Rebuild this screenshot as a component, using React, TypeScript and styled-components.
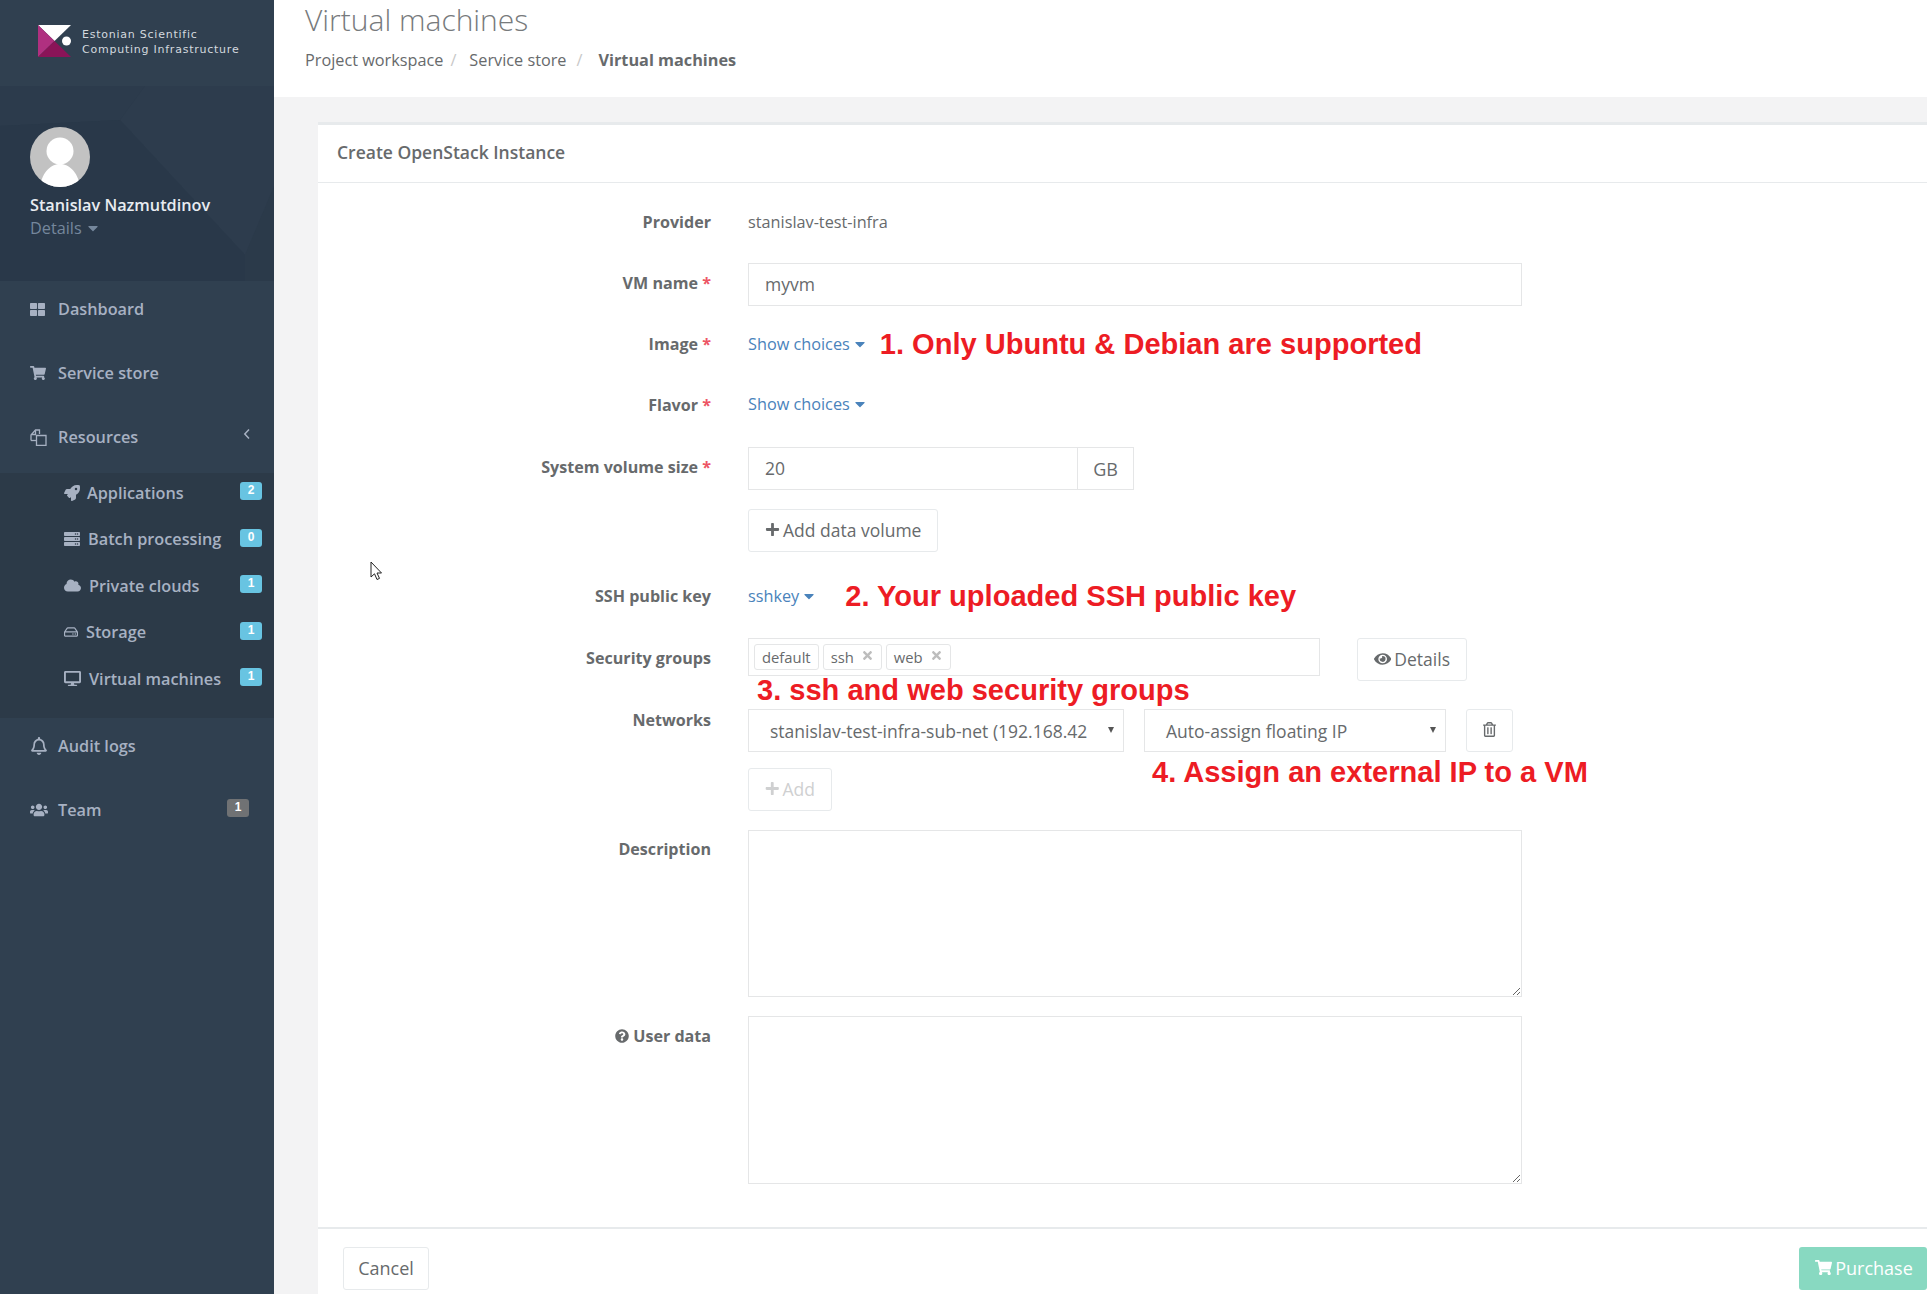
import * as React from "react";
import styled, { createGlobalStyle } from "styled-components";
import {
  FaCaretDown,
  FaCloud,
  FaDesktop,
  FaEye,
  FaPlus,
  FaQuestionCircle,
  FaRegBell,
  FaRegHdd,
  FaRegTrashAlt,
  FaRocket,
  FaServer,
  FaShoppingCart,
  FaThLarge,
  FaTimes,
  FaUsers,
} from "react-icons/fa";

const GlobalStyle = createGlobalStyle`
  html, body {
    margin: 0;
    padding: 0;
    height: 1294px;
    overflow: hidden;
    background: #f3f3f4;
  }
  * { box-sizing: border-box; }
`;

const Page = styled.div`
  display: flex;
  position: relative;
  width: 1927px;
  height: 1294px;
  overflow: hidden;
  font-family: "Open Sans", sans-serif;
  font-size: 16.25px;
  color: #676a6c;
`;

const Sidebar = styled.aside`
  flex: 0 0 274px;
  background: #304050;
  color: #a7b1c2;
  font-weight: 600;
`;

const LogoBar = styled.div`
  height: 86px;
  display: flex;
  align-items: center;
  padding: 0 0 4px 38px;
  gap: 11px;
`;

const LogoText = styled.div`
  margin-top: 2px;
  font-family: "DejaVu Sans", sans-serif;
  font-size: 11px;
  font-weight: 400;
  line-height: 15px;
  letter-spacing: 0.76px;
  color: #d3d9df;
  white-space: nowrap;
`;

const Profile = styled.div`
  position: relative;
  height: 195px;
  padding: 41px 0 0 30px;
  background: #2b3a4a;
  overflow: hidden;
`;

const ProfileShapes = styled.svg`
  position: absolute;
  inset: 0;
`;

const Avatar = styled.svg`
  position: relative;
  display: block;
  width: 60px;
  height: 60px;
  border-radius: 50%;
`;

const ProfileName = styled.div`
  position: relative;
  margin-top: 7px;
  color: #e8ecf1;
  line-height: 22px;
  white-space: nowrap;
`;

const ProfileDetails = styled.div`
  position: relative;
  display: flex;
  align-items: center;
  gap: 3px;
  margin-top: 1px;
  font-weight: 400;
  line-height: 22px;
  color: #75879c;
`;

const NavList = styled.nav`
  display: block;
`;

const NavItem = styled.div`
  position: relative;
  display: flex;
  align-items: center;
  height: 64px;
  padding: 0 0 8px 30px;
`;

const NavIcon = styled.span<{ $size?: number }>`
  flex: 0 0 28px;
  display: flex;
  align-items: center;
  font-size: ${(p) => p.$size ?? 15}px;
`;

const SubMenu = styled.div`
  background: #2c3a48;
  padding-bottom: 12.5px;
`;

const SubItem = styled.div`
  position: relative;
  display: flex;
  align-items: center;
  height: 46.5px;
  padding: 0 0 7.5px 64px;
`;

const SubIcon = styled.span<{ $width: number; $size?: number }>`
  flex: 0 0 ${(p) => p.$width}px;
  display: flex;
  align-items: center;
  font-size: ${(p) => p.$size ?? 16}px;
`;

const Badge = styled.span<{ $gray?: boolean }>`
  position: absolute;
  right: ${(p) => (p.$gray ? 25 : 12)}px;
  top: ${(p) => (p.$gray ? 17 : 9)}px;
  width: 22px;
  height: 18px;
  border-radius: 3px;
  background: ${(p) => (p.$gray ? "#707274" : "#68c4e2")};
  color: #fff;
  font-family: "Liberation Sans", sans-serif;
  font-size: 12px;
  font-weight: 700;
  line-height: 16px;
  text-align: center;
`;

const Collapse = styled.svg`
  position: absolute;
  right: 23px;
  top: 19px;
`;

const Main = styled.main`
  flex: 1;
  min-width: 0;
`;

const Header = styled.header`
  height: 97px;
  padding: 0 0 0 31px;
  background: #fff;
`;

const PageTitle = styled.h1`
  margin: 0;
  height: 42px;
  font-size: 30px;
  font-weight: 300;
  line-height: 40px;
  color: #777a7c;
`;

const Breadcrumbs = styled.div`
  display: flex;
  align-items: center;
  height: 36px;
  white-space: nowrap;
`;

const Crumb = styled.span<{ $strong?: boolean }>`
  font-weight: ${(p) => (p.$strong ? 700 : 400)};
`;

const CrumbSep = styled.span<{ $before: number; $after: number }>`
  margin: 0 ${(p) => p.$after}px 0 ${(p) => p.$before}px;
  color: #c8c8c8;
`;

const Content = styled.div`
  padding: 25px 0 0 44px;
`;

const Card = styled.section`
  background: #fff;
  border-top: 3px solid #e7eaec;
  height: 1172px;
`;

const CardTitle = styled.div`
  height: 58px;
  padding: 0 0 4px 19px;
  display: flex;
  align-items: center;
  font-size: 17.5px;
  font-weight: 600;
  border-bottom: 1px solid #e7eaec;
`;

const FormBody = styled.div`
  height: 1046px;
  padding-top: 18px;
  border-bottom: 2px solid #e7eaec;
`;

const Row = styled.div<{ $gap?: number }>`
  display: grid;
  grid-template-columns: 393px 774px;
  column-gap: 37px;
  margin-bottom: ${(p) => p.$gap ?? 19}px;
  min-height: 43px;
`;

const Label = styled.label<{ $top?: number }>`
  padding-top: ${(p) => p.$top ?? 9}px;
  line-height: 22px;
  font-weight: 700;
  font-size: 16.1px;
  text-align: right;
  white-space: nowrap;
`;

const Required = styled.span`
  color: #ed5565;
`;

const HelpIcon = styled(FaQuestionCircle)`
  font-size: 14px;
  margin-right: 4px;
  vertical-align: -1px;
`;

const Control = styled.div`
  position: relative;
  display: flex;
  align-items: center;
  min-height: 43px;
  white-space: nowrap;
`;

const StaticValue = styled.span`
  margin-top: -1px;
`;

const ChoiceLink = styled.a`
  display: inline-flex;
  align-items: center;
  margin-top: -1px;
  color: #4a83bb;
  & > svg {
    margin-left: 2px;
  }
`;

const Annotation = styled.span<{ $gap?: number }>`
  margin-left: ${(p) => p.$gap ?? 0}px;
  font-family: "Liberation Sans", sans-serif;
  font-size: 29.05px;
  font-weight: 700;
  color: #ed1c24;
  white-space: nowrap;
`;

const FloatingAnnotation = styled(Annotation)<{ $x: number; $y: number }>`
  position: absolute;
  left: ${(p) => p.$x}px;
  top: ${(p) => p.$y}px;
  margin: 0;
  line-height: 34px;
`;

const TextInput = styled.input<{ $width?: number }>`
  width: ${(p) => (p.$width ? `${p.$width}px` : "100%")};
  height: 43px;
  padding: 0 16px 2px;
  border: 1px solid #e5e6e7;
  font: 17.5px "Open Sans", sans-serif;
  color: #676a6c;
  outline: none;
`;

const Addon = styled.span`
  width: 56px;
  height: 43px;
  display: flex;
  align-items: center;
  justify-content: center;
  border: 1px solid #e5e6e7;
  border-left: none;
  font-size: 18px;
`;

const Button = styled.button<{ $muted?: boolean; $width?: number }>`
  display: inline-flex;
  align-items: center;
  justify-content: center;
  gap: 3px;
  width: ${(p) => (p.$width ? `${p.$width}px` : "auto")};
  height: 43px;
  padding: 0 16px 2px;
  background: #fff;
  border: 1px solid #e7eaec;
  border-radius: 3px;
  font: 17.5px "Open Sans", sans-serif;
  color: ${(p) => (p.$muted ? "#cfd0d1" : "#676a6c")};
`;

const TagBox = styled.div`
  display: flex;
  align-items: center;
  gap: 4px;
  width: 572px;
  height: 38px;
  margin-right: 37px;
  padding: 0 0 0 5px;
  border: 1px solid #e5e6e7;
  align-self: flex-start;
`;

const Tag = styled.span`
  display: inline-flex;
  align-items: center;
  gap: 7px;
  height: 26px;
  padding: 0 7px;
  border: 1px solid #e5e6e7;
  border-radius: 3px;
  font-size: 14.8px;
`;

const TagClose = styled(FaTimes)`
  font-size: 13px;
  color: #bdbdbd;
  margin-top: -4px;
`;

const Select = styled.div<{ $width: number }>`
  position: relative;
  flex: 0 0 ${(p) => p.$width}px;
  height: 43px;
  padding: 0 0 0 21px;
  margin-right: 20px;
  border: 1px solid #e5e6e7;
  font-size: 17.5px;
  line-height: 42px;
  overflow: hidden;
  &::after {
    content: "";
    position: absolute;
    right: 9px;
    top: 17px;
    border-style: solid;
    border-width: 6px 3.5px 0;
    border-color: #555 transparent transparent;
  }
`;

const TextArea = styled.textarea<{ $height: number }>`
  display: block;
  width: 100%;
  height: ${(p) => p.$height}px;
  border: 1px solid #e5e6e7;
  resize: vertical;
  outline: none;
`;

const Footer = styled.div`
  display: flex;
  justify-content: space-between;
  align-items: flex-start;
  padding: 18px 0 0 25px;
`;

const CancelButton = styled(Button)`
  width: 86px;
  font-size: 18px;
`;

const PurchaseButton = styled.button`
  display: inline-flex;
  align-items: center;
  justify-content: center;
  gap: 3px;
  width: 128px;
  height: 43px;
  padding: 0 0 2px 2px;
  border: none;
  border-radius: 3px;
  background: #88d9c1;
  color: #fff;
  font: 18px "Open Sans", sans-serif;
`;

const Pointer = styled.svg`
  position: absolute;
  left: 370px;
  top: 561px;
`;

const App = () => {
  return (
    <Page>
      <GlobalStyle />
      <Sidebar>
        <LogoBar>
          <svg width="33" height="32" viewBox="0 0 33 32">
            <polygon points="0,0 33,0 16.5,16" fill="#fff" />
            <polygon points="0,0 16.5,16 0,32" fill="#b03080" />
            <polygon points="0,32 16.5,16 33,32" fill="#8a1458" />
            <circle cx="28.5" cy="16" r="4.5" fill="#fff" />
          </svg>
          <LogoText>
            Estonian Scientific
            <br />
            Computing Infrastructure
          </LogoText>
        </LogoBar>
        <Profile>
          <ProfileShapes width="274" height="195" viewBox="0 0 274 195">
            <polygon points="120,34 145,0 274,0 274,100 245,169" fill="#2d3c4d" />
            <polygon points="0,0 145,0 120,34 0,40" fill="#2c3b4c" />
            <polygon points="0,40 120,34 245,169 245,195 0,195" fill="#293849" />
          </ProfileShapes>
          <Avatar viewBox="0 0 60 60">
            <rect width="60" height="60" fill="#c2c2c2" />
            <circle cx="30" cy="24" r="13.5" fill="#fff" />
            <path d="M10 60 C12 44 22 37 30 37 C38 37 48 44 50 60 Z" fill="#fff" />
          </Avatar>
          <ProfileName>Stanislav Nazmutdinov</ProfileName>
          <ProfileDetails>
            Details <FaCaretDown size={16} />
          </ProfileDetails>
        </Profile>
        <NavList>
          <NavItem>
            <NavIcon>
              <FaThLarge />
            </NavIcon>
            Dashboard
          </NavItem>
          <NavItem>
            <NavIcon $size={16}>
              <FaShoppingCart />
            </NavIcon>
            Service store
          </NavItem>
          <NavItem>
            <NavIcon>
              <svg width="17" height="17" viewBox="0 0 17 17" fill="none" stroke="currentColor" strokeWidth="1.3">
                <path d="M1 11.5 V6 L5.5 1 H9.5 V5" />
                <path d="M1 11.5 H6" />
                <path d="M6.5 6.5 H16 V16.3 H6.5 Z" />
                <path d="M5.5 1.5 V5.5 H1.5" />
              </svg>
            </NavIcon>
            Resources
            <Collapse width="8" height="12" viewBox="0 0 8 12" fill="none" stroke="currentColor" strokeWidth="1.5">
              <polyline points="6,1.5 1.8,6 6,10.5" />
            </Collapse>
          </NavItem>
          <SubMenu>
            <SubItem>
              <SubIcon $width={23}>
                <FaRocket />
              </SubIcon>
              Applications
              <Badge>2</Badge>
            </SubItem>
            <SubItem>
              <SubIcon $width={24}>
                <FaServer />
              </SubIcon>
              Batch processing
              <Badge>0</Badge>
            </SubItem>
            <SubItem>
              <SubIcon $width={25} $size={17}>
                <FaCloud />
              </SubIcon>
              Private clouds
              <Badge>1</Badge>
            </SubItem>
            <SubItem>
              <SubIcon $width={22} $size={14}>
                <FaRegHdd />
              </SubIcon>
              Storage
              <Badge>1</Badge>
            </SubItem>
            <SubItem>
              <SubIcon $width={25} $size={17}>
                <FaDesktop />
              </SubIcon>
              Virtual machines
              <Badge>1</Badge>
            </SubItem>
          </SubMenu>
          <NavItem>
            <NavIcon $size={18}>
              <FaRegBell />
            </NavIcon>
            Audit logs
          </NavItem>
          <NavItem>
            <NavIcon $size={18}>
              <FaUsers />
            </NavIcon>
            Team
            <Badge $gray>1</Badge>
          </NavItem>
        </NavList>
      </Sidebar>
      <Main>
        <Header>
          <PageTitle>Virtual machines</PageTitle>
          <Breadcrumbs>
            <Crumb>Project workspace</Crumb>
            <CrumbSep $before={7} $after={13}>/</CrumbSep>
            <Crumb>Service store</Crumb>
            <CrumbSep $before={10} $after={16}>/</CrumbSep>
            <Crumb $strong>Virtual machines</Crumb>
          </Breadcrumbs>
        </Header>
        <Content>
          <Card>
            <CardTitle>Create OpenStack Instance</CardTitle>
            <FormBody>
              <Row>
                <Label $top={10}>Provider</Label>
                <Control>
                  <StaticValue>stanislav-test-infra</StaticValue>
                </Control>
              </Row>
              <Row $gap={17}>
                <Label>
                  VM name <Required>*</Required>
                </Label>
                <Control>
                  <TextInput defaultValue="myvm" />
                </Control>
              </Row>
              <Row $gap={17}>
                <Label $top={10}>
                  Image <Required>*</Required>
                </Label>
                <Control>
                  <ChoiceLink>
                    Show choices <FaCaretDown size={16} />
                  </ChoiceLink>
                  <Annotation $gap={12}>1. Only Ubuntu &amp; Debian are supported</Annotation>
                </Control>
              </Row>
              <Row $gap={21}>
                <Label $top={11}>
                  Flavor <Required>*</Required>
                </Label>
                <Control>
                  <ChoiceLink>
                    Show choices <FaCaretDown size={16} />
                  </ChoiceLink>
                </Control>
              </Row>
              <Row>
                <Label>
                  System volume size <Required>*</Required>
                </Label>
                <Control>
                  <TextInput $width={330} defaultValue="20" />
                  <Addon>GB</Addon>
                </Control>
              </Row>
              <Row $gap={23}>
                <span />
                <Control>
                  <Button>
                    <FaPlus size={15} /> Add data volume
                  </Button>
                </Control>
              </Row>
              <Row $gap={20}>
                <Label $top={10}>SSH public key</Label>
                <Control>
                  <ChoiceLink>
                    sshkey <FaCaretDown size={16} />
                  </ChoiceLink>
                  <Annotation $gap={28}>2. Your uploaded SSH public key</Annotation>
                </Control>
              </Row>
              <Row $gap={28}>
                <Label>Security groups</Label>
                <Control>
                  <TagBox>
                    <Tag>default</Tag>
                    <Tag>
                      ssh <TagClose />
                    </Tag>
                    <Tag>
                      web <TagClose />
                    </Tag>
                  </TagBox>
                  <Button $width={110}>
                    <FaEye size={18} /> Details
                  </Button>
                  <FloatingAnnotation $x={9} $y={35}>3. ssh and web security groups</FloatingAnnotation>
                </Control>
              </Row>
              <Row $gap={16}>
                <Label $top={-2}>Networks</Label>
                <Control>
                  <Select $width={376}>stanislav-test-infra-sub-net (192.168.42</Select>
                  <Select $width={302}>Auto-assign floating IP</Select>
                  <Button $width={47}>
                    <FaRegTrashAlt size={15} />
                  </Button>
                </Control>
              </Row>
              <Row>
                <span />
                <Control>
                  <Button $muted $width={84}>
                    <FaPlus size={15} /> Add
                  </Button>
                  <FloatingAnnotation $x={404} $y={-13}>4. Assign an external IP to a VM</FloatingAnnotation>
                </Control>
              </Row>
              <Row>
                <Label $top={8}>Description</Label>
                <TextArea $height={167} />
              </Row>
              <Row>
                <Label>
                  <HelpIcon />
                  User data
                </Label>
                <TextArea $height={168} />
              </Row>
            </FormBody>
            <Footer>
              <CancelButton>Cancel</CancelButton>
              <PurchaseButton>
                <FaShoppingCart size={17} /> Purchase
              </PurchaseButton>
            </Footer>
          </Card>
        </Content>
      </Main>
      <Pointer width="13" height="21" viewBox="0 0 13 21">
        <path d="M1 1 L1 16 L4.5 12.8 L7 18.5 L9.5 17.4 L7 12 L11.5 12 Z" fill="#fff" stroke="#222" strokeWidth="1" />
      </Pointer>
    </Page>
  );
};

export default App;
